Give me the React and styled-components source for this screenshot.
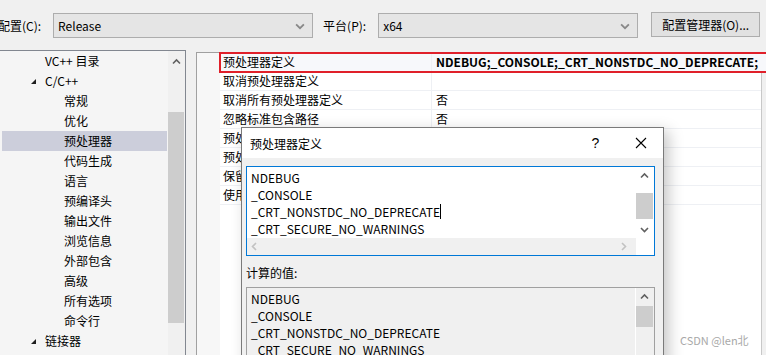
import React from "react";
import styled, { createGlobalStyle } from "styled-components";

const GlobalStyle = createGlobalStyle`
  html, body {
    margin: 0;
    padding: 0;
    background: #f0f0f0;
  }
  body {
    font-family: "Noto Sans CJK SC", "Noto Sans", sans-serif;
    font-size: 12px;
    color: #000;
  }
`;

const treeItems = [
  { label: "VC++ 目录", level: 1 },
  { label: "C/C++", level: 1, open: true },
  { label: "常规", level: 2 },
  { label: "优化", level: 2 },
  { label: "预处理器", level: 2, selected: true },
  { label: "代码生成", level: 2 },
  { label: "语言", level: 2 },
  { label: "预编译头", level: 2 },
  { label: "输出文件", level: 2 },
  { label: "浏览信息", level: 2 },
  { label: "外部包含", level: 2 },
  { label: "高级", level: 2 },
  { label: "所有选项", level: 2 },
  { label: "命令行", level: 2 },
  { label: "链接器", level: 1, open: true },
];

const props = [
  { name: "预处理器定义", value: "NDEBUG;_CONSOLE;_CRT_NONSTDC_NO_DEPRECATE;", active: true },
  { name: "取消预处理器定义", value: "" },
  { name: "取消所有预处理器定义", value: "否" },
  { name: "忽略标准包含路径", value: "否" },
  { name: "预处理到文件", value: "否" },
  { name: "预处理取消显示行号", value: "否" },
  { name: "保留注释", value: "否" },
  { name: "使用标准一致性预处理器", value: "" },
];

const defines = ["NDEBUG", "_CONSOLE", "_CRT_NONSTDC_NO_DEPRECATE", "_CRT_SECURE_NO_WARNINGS"];

const Chevron = ({ dir = "down", color = "#606060", size = 9 }) => {
  const pts = {
    down: "1,3 4.5,6.5 8,3",
    up: "1,6.5 4.5,3 8,6.5",
    left: "6,1 2.5,4.5 6,8",
    right: "3,1 6.5,4.5 3,8",
  }[dir];
  return (
    <svg width={size} height={size} viewBox="0 0 9 9">
      <polyline points={pts} fill="none" stroke={color} strokeWidth="1.6" />
    </svg>
  );
};

const App = () => {
  return (
    <Page>
      <GlobalStyle />
      <TopBar>
        <FieldLabel first>配置(C):</FieldLabel>
        <Combo>
          <span>Release</span>
          <Chevron dir="down" color="#888" size={10} />
        </Combo>
        <FieldLabel>平台(P):</FieldLabel>
        <Combo>
          <span>x64</span>
          <Chevron dir="down" color="#888" size={10} />
        </Combo>
        <Button>配置管理器(O)...</Button>
      </TopBar>

      <Main>
        <TreePanel>
          <TreeList>
            {treeItems.map((item, i) => (
              <TreeRow key={i} level={item.level} selected={item.selected}>
                {item.open && <Triangle />}
                {item.label}
              </TreeRow>
            ))}
          </TreeList>
          <VScroll>
            <ArrowBox>
              <Chevron dir="up" />
            </ArrowBox>
            <TreeThumb />
          </VScroll>
        </TreePanel>

        <GridPanel>
          <Gutter />
          <GridBody>
            {props.map((p, i) => (
              <PropRow key={i} active={p.active}>
                <PropName>{p.name}</PropName>
                <PropValue active={p.active}>{p.value}</PropValue>
              </PropRow>
            ))}
          </GridBody>
        </GridPanel>
      </Main>

      <Dialog>
        <TitleBar>
          <span>预处理器定义</span>
          <TitleButtons>
            <TitleBtn>?</TitleBtn>
            <TitleBtn>
              <svg width="12" height="12" viewBox="0 0 12 12">
                <path d="M1 1 L11 11 M11 1 L1 11" stroke="#000" strokeWidth="1.1" />
              </svg>
            </TitleBtn>
          </TitleButtons>
        </TitleBar>
        <DialogBody>
          <EditBox focused>
            <EditInner>
              <EditText>
                {defines.map((d, i) => (
                  <Line key={i}>
                    {d}
                    {i === 2 && <Caret />}
                  </Line>
                ))}
              </EditText>
              <EditVScroll>
                <ArrowBox small>
                  <Chevron dir="up" />
                </ArrowBox>
                <EditThumb top={9} height={26} />
                <Spacer />
                <ArrowBox small>
                  <Chevron dir="down" />
                </ArrowBox>
              </EditVScroll>
            </EditInner>
            <HScrollRow>
              <HScroll>
                <Chevron dir="left" color="#c2c2c2" />
                <Chevron dir="right" color="#c2c2c2" />
              </HScroll>
              <Corner />
            </HScrollRow>
          </EditBox>

          <SectionLabel>计算的值:</SectionLabel>

          <EditBox readonly>
            <EditInner tall>
              <EditText>
                {defines.map((d, i) => (
                  <Line key={i}>{d}</Line>
                ))}
              </EditText>
              <EditVScroll readonly>
                <ArrowBox small>
                  <Chevron dir="up" />
                </ArrowBox>
                <EditThumb top={1} height={21} />
                <Spacer />
                <ArrowBox small>
                  <Chevron dir="down" />
                </ArrowBox>
              </EditVScroll>
            </EditInner>
          </EditBox>
        </DialogBody>
      </Dialog>

      <Watermark>CSDN @len北</Watermark>
    </Page>
  );
};

const Page = styled.div`
  position: relative;
  width: 766px;
  height: 355px;
  overflow: hidden;
  background: #f0f0f0;
`;

const TopBar = styled.div`
  display: flex;
  align-items: center;
  height: 50px;
  padding-top: 1px;
  box-sizing: border-box;
`;

const FieldLabel = styled.span`
  margin-left: ${(p) => (p.first ? "-2px" : "10px")};
  margin-right: 12px;
  white-space: nowrap;
`;

const Combo = styled.div`
  width: 260px;
  height: 25px;
  box-sizing: border-box;
  border: 1px solid #adadad;
  background: #e5e5e5;
  display: flex;
  align-items: center;
  justify-content: space-between;
  padding: 0 7px 0 4px;
`;

const Button = styled.div`
  margin-left: 13px;
  width: 109px;
  height: 25px;
  box-sizing: border-box;
  border: 1px solid #adadad;
  background: #e1e1e1;
  display: flex;
  align-items: center;
  justify-content: center;
  white-space: nowrap;
  margin-top: -2px;
`;

const Main = styled.div`
  display: flex;
  align-items: flex-start;
  height: 305px;
`;

const TreePanel = styled.div`
  margin-left: -1px;
  width: 187px;
  height: 320px;
  box-sizing: border-box;
  border: 1px solid #828790;
  background: #f5f5f5;
  display: flex;
`;

const TreeList = styled.div`
  flex: 1;
  padding: 0 1px 0 2px;
`;

const TreeRow = styled.div`
  position: relative;
  height: 20px;
  line-height: 20px;
  padding-left: ${(p) => (p.level === 1 ? "43px" : "62px")};
  background: ${(p) => (p.selected ? "#cccedb" : "transparent")};
  white-space: nowrap;
`;

const Triangle = styled.span`
  position: absolute;
  left: 29px;
  top: 8px;
  width: 0;
  height: 0;
  border-left: 5px solid transparent;
  border-bottom: 5px solid #1e1e1e;
`;

const VScroll = styled.div`
  width: 17px;
  background: #f0f0f0;
  display: flex;
  flex-direction: column;
`;

const ArrowBox = styled.div`
  height: ${(p) => (p.small ? "17px" : "20px")};
  display: flex;
  align-items: center;
  justify-content: center;
`;

const TreeThumb = styled.div`
  margin: 41px 1px 0 0;
  height: 211px;
  background: #cdcdcd;
`;

const GridPanel = styled.div`
  margin-left: 10px;
  margin-top: 2px;
  width: 566px;
  height: 320px;
  box-sizing: border-box;
  border: 1px solid #a0a0a0;
  border-right-color: #c8c8c8;
  background: #fff;
  display: flex;
`;

const Gutter = styled.div`
  width: 23px;
  background: #f7f7f7;
`;

const GridBody = styled.div`
  flex: 1;
`;

const PropRow = styled.div`
  display: flex;
  height: 19px;
  box-sizing: border-box;
  border-bottom: 1px solid #eef0f4;
  margin-right: ${(p) => (p.active ? "-12px" : "0")};
  outline: ${(p) => (p.active ? "2px solid #e0202a" : "none")};
  outline-offset: -1px;
  background: ${(p) => (p.active ? "#f7f8fb" : "#fff")};
`;

const PropName = styled.div`
  width: 212px;
  box-sizing: border-box;
  padding-left: 3px;
  line-height: 18px;
  border-right: 1px solid #eef0f4;
  white-space: nowrap;
  overflow: hidden;
`;

const PropValue = styled.div`
  flex: 1;
  padding-left: 4px;
  line-height: 18px;
  white-space: nowrap;
  overflow: hidden;
  font-weight: ${(p) => (p.active ? 700 : 400)};
`;

const Dialog = styled.div`
  position: absolute;
  left: 241px;
  top: 127px;
  width: 423px;
  height: 260px;
  box-sizing: border-box;
  border: 1px solid #7a7a7a;
  background: #f0f0f0;
  box-shadow: 5px 4px 14px rgba(0, 0, 0, 0.22);
`;

const TitleBar = styled.div`
  height: 30px;
  background: #fff;
  display: flex;
  align-items: center;
  justify-content: space-between;
  padding-left: 8px;
`;

const TitleButtons = styled.div`
  display: flex;
`;

const TitleBtn = styled.div`
  width: 45px;
  height: 30px;
  display: flex;
  align-items: center;
  justify-content: center;
  font-family: "Liberation Sans", sans-serif;
  font-size: 14px;
`;

const DialogBody = styled.div`
  padding: 8px 8px 0 4px;
`;

const EditBox = styled.div`
  border: 1px solid ${(p) => (p.focused ? "#0078d7" : "#a0a0a0")};
  background: ${(p) => (p.readonly ? "#f0f0f0" : "#fff")};
`;

const EditInner = styled.div`
  display: flex;
  height: ${(p) => (p.tall ? "80px" : "71px")};
`;

const EditText = styled.div`
  flex: 1;
  padding: 2px 0 0 4px;
  overflow: hidden;
`;

const Line = styled.div`
  height: 17px;
  line-height: 17px;
  white-space: nowrap;
  display: flex;
  align-items: center;
`;

const Caret = styled.span`
  display: inline-block;
  width: 1px;
  height: 15px;
  background: #000;
`;

const EditVScroll = styled.div`
  width: 17px;
  margin-right: 1px;
  display: flex;
  flex-direction: column;
  background: ${(p) => (p.readonly ? "#f0f0f0" : "#fff")};
  border-left: ${(p) => (p.readonly ? "1px solid #fff" : "none")};
`;

const EditThumb = styled.div`
  margin-top: ${(p) => p.top}px;
  height: ${(p) => p.height}px;
  background: #cdcdcd;
`;

const Spacer = styled.div`
  flex: 1;
`;

const HScrollRow = styled.div`
  display: flex;
  height: 17px;
`;

const HScroll = styled.div`
  flex: 1;
  background: #f0f0f0;
  display: flex;
  align-items: center;
  justify-content: space-between;
  padding: 0 8px 0 3px;
`;

const Corner = styled.div`
  width: 18px;
  background: #fff;
`;

const SectionLabel = styled.div`
  height: 31px;
  line-height: 34px;
`;

const Watermark = styled.div`
  position: absolute;
  left: 680px;
  top: 332px;
  font-size: 11px;
  color: #a8a8a8;
  white-space: nowrap;
`;

export default App;
